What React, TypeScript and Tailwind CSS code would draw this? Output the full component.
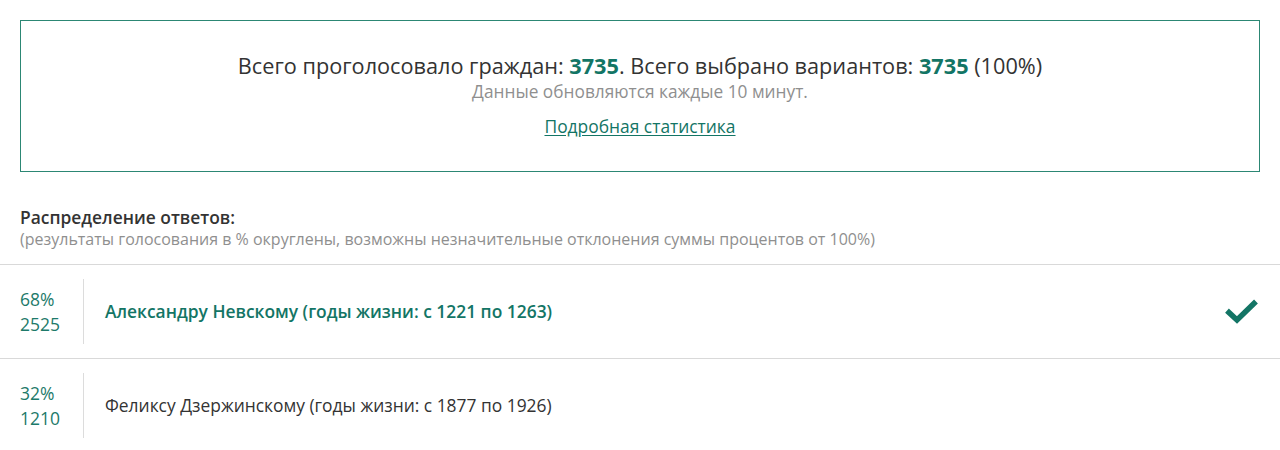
import React from "react";

const font = { fontFamily: '"Open Sans", "Noto Sans", sans-serif' };

function Check() {
  return (
    <svg width="34" height="26" viewBox="0 0 34 26" className="shrink-0">
      <path d="M5 13.5 L13 21 L30 4.5" fill="none" stroke="#137565" strokeWidth="5.5" strokeLinecap="square" strokeLinejoin="miter" />
    </svg>
  );
}

function Row({ pct, count, text, selected }: { pct: string; count: string; text: string; selected?: boolean }) {
  return (
    <div className="flex items-center border-t border-[#d9d9d9] py-[14px]">
      <div className="flex h-[65px] w-[83px] shrink-0 flex-col justify-center pl-5 text-[17.5px] leading-[25px] text-[#1d7a6a]">
        <div>{pct}</div>
        <div>{count}</div>
      </div>
      <div className="flex h-[65px] flex-1 items-center border-l border-[#dcdcdc] pl-[21px] pr-[22px]">
        <div className={selected ? "flex-1 text-[17.4px] font-semibold text-[#137565]" : "flex-1 text-[17.4px] text-[#333]"}>{text}</div>
        {selected && <Check />}
      </div>
    </div>
  );
}

export default function App() {
  return (
    <div className="min-h-[450px] bg-white" style={font}>
      <div className="px-5 pt-5">
        <div className="flex flex-col items-center border border-[#2c8774] pb-[34px] pt-[32px] text-center">
          <div className="text-[21.7px] leading-[26px] text-[#333]">
            Всего проголосовало граждан: <span className="font-bold text-[#137565]">3735</span>. Всего выбрано вариантов:{" "}
            <span className="font-bold text-[#137565]">3735</span> (100%)
          </div>
          <div className="mt-[3px] text-[17.3px] leading-[20px] text-[#8f8f8f]">Данные обновляются каждые 10 минут.</div>
          <a href="#" className="mt-[13px] text-[17.4px] leading-[22px] text-[#137565] underline underline-offset-2">
            Подробная статистика
          </a>
        </div>
        <div className="mt-[34px] text-[17.4px] font-semibold leading-[22px] text-[#333]">Распределение ответов:</div>
        <div className="mt-px text-[16px] leading-[20px] text-[#8f8f8f]">
          (результаты голосования в % округлены, возможны незначительные отклонения суммы процентов от 100%)
        </div>
      </div>
      <div className="mt-[15px]">
        <Row pct="68%" count="2525" text="Александру Невскому (годы жизни: с 1221 по 1263)" selected />
        <Row pct="32%" count="1210" text="Феликсу Дзержинскому (годы жизни: с 1877 по 1926)" />
      </div>
    </div>
  );
}
